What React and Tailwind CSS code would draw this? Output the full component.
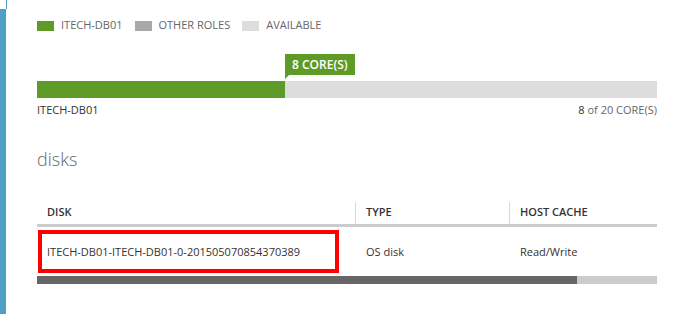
export default function App() {
  const font = { fontFamily: '"Segoe UI", "Open Sans", "Liberation Sans", sans-serif' }
  return (
    <div className="flex h-[314px] w-[694px] bg-white overflow-hidden text-[#333]" style={font}>
      {/* left rail */}
      <div className="flex flex-col w-[7px] shrink-0">
        <div className="h-[9px] border-r border-[#4f9fc4]" />
        <div className="flex-1 bg-[#4f9fc4] w-[6px]" />
      </div>

      <div className="flex-1 pl-[30px] pr-[37px]">
        {/* legend */}
        <div className="flex items-center h-[11px] mt-[20px] text-[11px] text-[#666]">
          <span className="w-[17px] h-[10px] bg-[#5e9a26] mr-[7px]" />
          <span className="mr-[12px]">ITECH-DB01</span>
          <span className="w-[17px] h-[10px] bg-[#a8a8a8] mr-[7px]" />
          <span className="mr-[12px]">OTHER ROLES</span>
          <span className="w-[17px] h-[10px] bg-[#dddddd] mr-[7px]" />
          <span>AVAILABLE</span>
        </div>

        {/* usage */}
        <div className="mt-[23px] relative">
          <div className="h-[27px] relative">
            <div className="absolute left-[248px] top-0 h-[21px] px-[7px] bg-[#5e9a26] text-white text-[12px] font-semibold flex items-center">
              8 CORE(S)
              <span className="absolute left-0 top-[21px] w-0 h-0 border-t-[4px] border-t-[#5e9a26] border-r-[4px] border-r-transparent" />
            </div>
          </div>
          <div className="flex h-[17px] w-[620px] bg-[#dddddd]">
            <div className="h-full bg-[#5e9a26]" style={{ width: '40%' }} />
          </div>
          <div className="flex justify-between w-[620px] text-[11px] mt-[4px]">
            <span className="text-[#333]">ITECH-DB01</span>
            <span className="text-[#666]"><span className="text-[#333]">8</span> of 20 CORE(S)</span>
          </div>
        </div>

        {/* disks */}
        <div className="mt-[31px] text-[18px] font-light text-[#666] leading-none">disks</div>

        <div className="w-[620px] mt-[34px]">
          <div className="flex h-[25px] items-center text-[11px] font-semibold text-[#333] border-b-[3px] border-[#cccccc]">
            <div className="w-[319px] pl-[10px] border-r border-[#d8d8d8] h-full flex items-center">DISK</div>
            <div className="w-[154px] pl-[10px] border-r border-[#d8d8d8] h-full flex items-center">TYPE</div>
            <div className="flex-1 pl-[10px]">HOST CACHE</div>
          </div>
          <div className="flex h-[49px] items-center text-[11px] text-[#333] pt-[3px]">
            <div className="w-[319px] h-full flex items-center">
              <div className="w-[301px] h-[43px] ml-[1px] -mt-[3px] border-[4px] border-[#ff0000] flex items-center pl-[5px] pt-[3px]">
                ITECH-DB01-ITECH-DB01-0-201505070854370389
              </div>
            </div>
            <div className="w-[154px] pl-[10px]">OS disk</div>
            <div className="flex-1 pl-[10px]">Read/Write</div>
          </div>
          <div className="flex h-[8px] bg-[#cccccc]">
            <div className="h-full bg-[#666666] w-[540px]" />
          </div>
        </div>
      </div>
    </div>
  )
}
